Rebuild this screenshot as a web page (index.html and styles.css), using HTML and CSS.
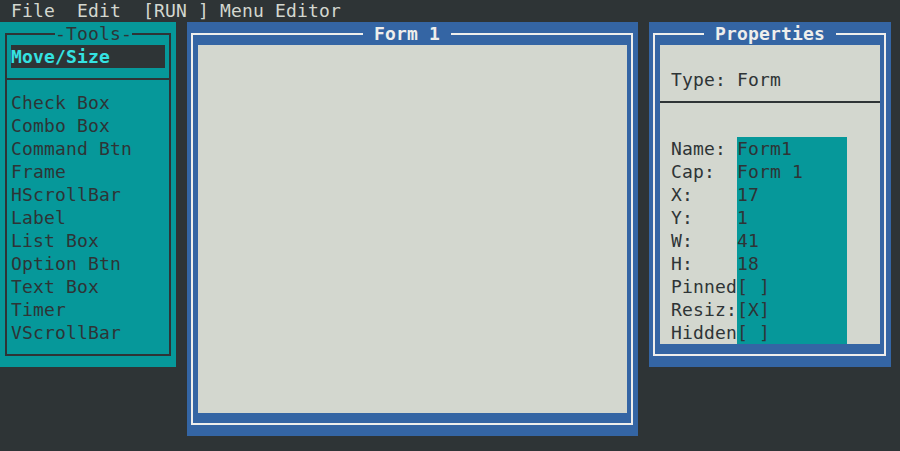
FILE: index.html
```html
<!DOCTYPE html>
<html lang="en">
<head>
    <meta charset="UTF-8">
    <title>Form Designer</title>
    <link rel="stylesheet" href="styles.css">
</head>
<body>
    <div class="menubar">File  Edit  [RUN ] Menu Editor</div>

    <div class="desk">
        <!-- toolbox -->
        <div class="panel tools">
            <fieldset class="frame">
                <legend>-Tools-</legend>
                <div class="tool selected">Move/Size</div>
                <div class="rule"></div>
                <div class="tool">Check Box</div>
                <div class="tool">Combo Box</div>
                <div class="tool">Command Btn</div>
                <div class="tool">Frame</div>
                <div class="tool">HScrollBar</div>
                <div class="tool">Label</div>
                <div class="tool">List Box</div>
                <div class="tool">Option Btn</div>
                <div class="tool">Text Box</div>
                <div class="tool">Timer</div>
                <div class="tool">VScrollBar</div>
            </fieldset>
        </div>

        <!-- form being edited -->
        <div class="panel window form-win">
            <fieldset class="frame">
                <legend>Form 1</legend>
                <div class="client form-client"></div>
            </fieldset>
        </div>

        <!-- property sheet -->
        <div class="panel window props-win">
            <fieldset class="frame">
                <legend>Properties</legend>
                <div class="client props">
                    <div class="type">Type: Form</div>
                    <div class="rule"></div>
                    <div class="fields">
                        <span class="label">Name:</span><span class="value">Form1</span>
                        <span class="label">Cap:</span><span class="value">Form 1</span>
                        <span class="label">X:</span><span class="value">17</span>
                        <span class="label">Y:</span><span class="value">1</span>
                        <span class="label">W:</span><span class="value">41</span>
                        <span class="label">H:</span><span class="value">18</span>
                        <span class="label">Pinned</span><span class="value">[ ]</span>
                        <span class="label">Resiz:</span><span class="value">[X]</span>
                        <span class="label">Hidden</span><span class="value">[ ]</span>
                    </div>
                </div>
            </fieldset>
        </div>
    </div>
</body>
</html>
```

FILE: styles.css
```css
* {
    box-sizing: border-box;
}
body {
    margin: 0;
    background-color: #2e3436;
    color: #2e3436;
    font-family: 'DejaVu Sans Mono', monospace;
    font-size: 18px;
    letter-spacing: 0.16px;
    line-height: 23px;
    height: 451px;
    overflow: hidden;
}
.menubar {
    height: 22px;
    line-height: 22px;
    padding-left: 11px;
    color: #d3d7cf;
    white-space: pre;
}
.desk {
    display: flex;
    align-items: flex-start;
    gap: 11px;
}
.panel {
    padding: 0 5px 11px 5px;
}
.frame {
    margin: 0;
    min-width: 0;
    border: 2px solid #2e3436;
    padding: 0 4px 10px 4px;
}
.frame legend {
    padding: 0;
    margin-left: 44px;
    line-height: 23px;
    white-space: pre;
}

/* toolbox */
.tools {
    width: 176px;
    background-color: #06989a;
}
.tool {
    height: 23px;
    white-space: pre;
}
.tool.selected {
    background-color: #2e3436;
    color: #34e2e2;
    font-weight: bold;
}
.rule {
    height: 2px;
    margin: 10px -4px 11px -4px;
    background-color: #2e3436;
}

/* blue windows */
.window {
    background-color: #3465a4;
    padding-left: 4px;
}
.window .frame {
    border-color: #eeeeec;
    padding-left: 5px;
}
.window legend {
    padding: 0 11px;
    color: #eeeeec;
    font-weight: bold;
}
.client {
    background-color: #d3d7cf;
}
.form-win {
    width: 451px;
}
.form-win legend {
    margin-left: 165px;
}
.form-client {
    height: 368px;
}
.props-win {
    width: 242px;
}
.props {
    height: 299px;
    padding-top: 23px;
}
.props .type {
    padding-left: 11px;
}
.props .rule {
    margin: 10px 0 34px 0;
}
.fields {
    display: grid;
    grid-template-columns: 66px 110px;
    padding-left: 11px;
}
.label,
.value {
    height: 23px;
    white-space: pre;
}
.value {
    background-color: #06989a;
}
```
